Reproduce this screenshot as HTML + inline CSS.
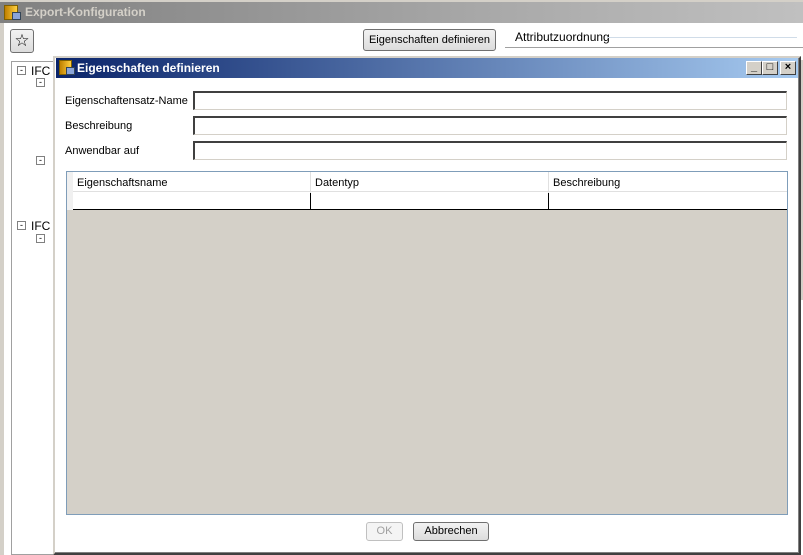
<!DOCTYPE html>
<html><head><style>
*{margin:0;padding:0;box-sizing:border-box}
body{width:803px;height:555px;position:relative;background:#fff;font-family:"Liberation Sans",sans-serif;font-size:11px;overflow:hidden;color:#000}
.a{position:absolute;white-space:nowrap}
.btn{position:absolute;border:1px solid #707070;border-radius:3px;background:linear-gradient(#f2f2f2,#dcdcdc);text-align:center;font-size:11px;white-space:nowrap}
.inp{position:absolute;left:193px;width:594px;height:19px;border:1px solid #d4d0c8;border-top:2px solid #404040;border-left:2px solid #404040;background:#fff}
.lbl{position:absolute;left:65px;font-size:11px}
.tb{position:absolute;top:3px;width:16px;height:14px;background:#d4d0c8;border:1px solid;border-color:#fff #404040 #404040 #fff;font-size:11px;font-weight:bold;text-align:center;line-height:11px}
.pm{position:absolute;width:9px;height:9px;border:1px solid #808080;font-size:9px;line-height:6px;text-align:center}
</style></head><body>
<div class="a" style="left:0;top:0;width:803px;height:2px;background:#d4d0c8"></div>
<div class="a" style="left:0;top:2px;width:803px;height:21px;background:linear-gradient(90deg,#808080,#a8a8a8 60%,#c0c0c0)"></div>
<div class="a" style="left:4px;top:5px;width:14px;height:15px;background:linear-gradient(90deg,#c08000,#ffd040);border:1px solid #806000"></div>
<div class="a" style="left:12px;top:12px;width:9px;height:8px;background:#8aa4d8;border:1px solid #345"></div>
<div class="a" style="left:25px;top:5px;color:#d4d0c8;font-weight:bold;font-size:12px">Export-Konfiguration</div>
<div class="a" style="left:0;top:23px;width:4px;height:532px;background:#d4d0c8"></div>
<div class="btn" style="left:10px;top:29px;width:24px;height:24px;line-height:21px;font-size:17px">☆</div>
<div class="btn" style="left:363px;top:29px;width:133px;height:22px;line-height:20px">Eigenschaften definieren</div>
<div class="a" style="left:515px;top:30px;font-size:12px">Attributzuordnung</div>
<div class="a" style="left:607px;top:37px;width:190px;height:1px;background:#d0dce8"></div>
<div class="a" style="left:505px;top:47px;width:298px;height:1px;background:#a0a0a0"></div>
<div class="a" style="left:11px;top:61px;width:44px;height:494px;border:1px solid #a0a0a0;border-right:none"></div>
<div class="pm" style="left:17px;top:66px">-</div>
<div class="a" style="left:31px;top:64px;font-size:12px">IFC</div>
<div class="pm" style="left:36px;top:78px">-</div>
<div class="pm" style="left:36px;top:156px">-</div>
<div class="pm" style="left:17px;top:221px">-</div>
<div class="a" style="left:31px;top:219px;font-size:12px">IFC</div>
<div class="pm" style="left:36px;top:234px">-</div>
<div class="a" style="left:800px;top:60px;width:3px;height:240px;background:#d4d0c8"></div>

<div class="a" style="left:53px;top:56px;width:748px;height:499px;background:#fff;border:2px solid;border-color:#d4d0c8 #404040 #404040 #d4d0c8;box-shadow:inset -1px -1px #808080"></div>
<div class="a" style="left:56px;top:58px;width:742px;height:20px;background:linear-gradient(90deg,#0a246a,#a6caf0)"></div>
<div class="a" style="left:59px;top:60px;width:13px;height:15px;background:linear-gradient(90deg,#c08000,#ffd040);border:1px solid #806000"></div>
<div class="a" style="left:66px;top:67px;width:9px;height:8px;background:#8aa4d8;border:1px solid #345"></div>
<div class="a" style="left:77px;top:61px;color:#fff;font-weight:bold;font-size:12px">Eigenschaften definieren</div>
<div class="tb" style="left:746px;top:61px">_</div>
<div class="tb" style="left:762px;top:61px">□</div>
<div class="tb" style="left:780px;top:61px">×</div>

<div class="lbl" style="top:95px">Eigenschaftensatz-Name</div>
<div class="lbl" style="top:120px">Beschreibung</div>
<div class="lbl" style="top:145px">Anwendbar auf</div>
<div class="inp" style="top:91px"></div>
<div class="inp" style="top:116px"></div>
<div class="inp" style="top:141px"></div>

<div class="a" style="left:66px;top:171px;width:722px;height:344px;background:#d4d0c8;border:1px solid #7f9db9"></div>
<div class="a" style="left:67px;top:172px;width:720px;height:38px;background:#fff"></div>
<div class="a" style="left:67px;top:172px;width:6px;height:38px;background:#f0f0f0"></div>
<div class="a" style="left:73px;top:172px;width:714px;height:20px;background:#fff;border-bottom:1px solid #e0e0e0"></div>
<div class="a" style="left:77px;top:177px">Eigenschaftsname</div>
<div class="a" style="left:315px;top:177px">Datentyp</div>
<div class="a" style="left:553px;top:177px">Beschreibung</div>
<div class="a" style="left:310px;top:172px;width:1px;height:38px;background:#e0e0e0"></div>
<div class="a" style="left:548px;top:172px;width:1px;height:38px;background:#e0e0e0"></div>
<div class="a" style="left:310px;top:193px;width:1px;height:17px;background:#000"></div>
<div class="a" style="left:548px;top:193px;width:1px;height:17px;background:#000"></div>
<div class="a" style="left:73px;top:209px;width:714px;height:1px;background:#000"></div>

<div class="btn" style="left:366px;top:522px;width:37px;height:19px;line-height:17px;color:#a0a0a0;border-color:#c0c0c0;background:#f4f4f4">OK</div>
<div class="btn" style="left:413px;top:522px;width:76px;height:19px;line-height:17px">Abbrechen</div>
</body></html>
